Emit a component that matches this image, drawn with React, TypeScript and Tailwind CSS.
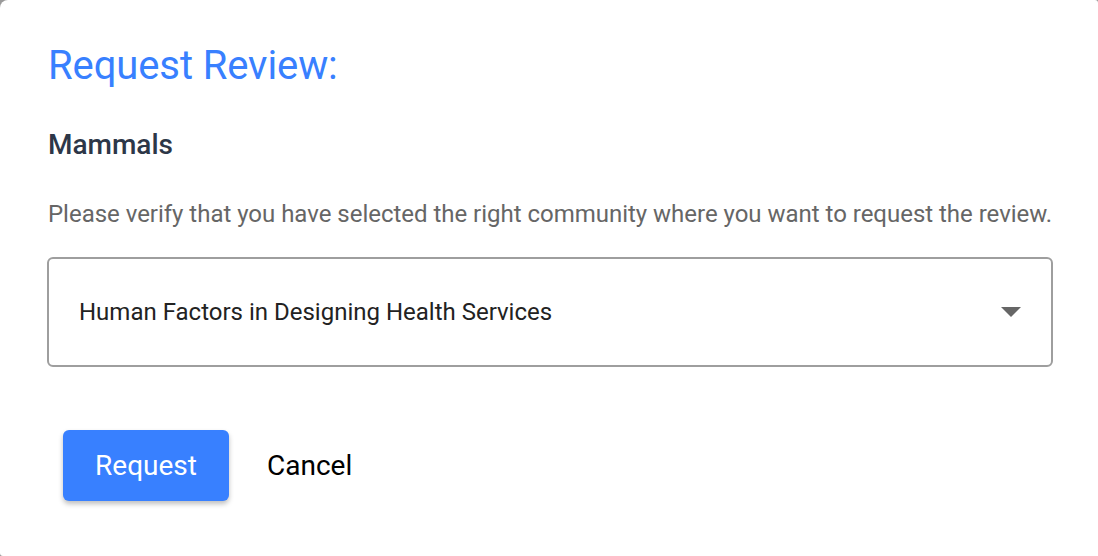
import React from "react";

export default function App() {
  return (
    <div className="w-[1098px] h-[556px] bg-[#9a9a9a] font-['Roboto','Liberation_Sans',sans-serif]">
      <div className="w-full h-full bg-white rounded-tl-[8px] rounded-tr-[3px] rounded-bl-[3px] pl-[48px] pr-[44px] pt-[42px]">
        <h1 className="text-[40px] leading-[48px] text-[#3880ff] tracking-[-0.1px]">Request Review:</h1>

        <h2 className="mt-[39px] text-[28px] leading-[32px] font-medium text-[#2d3748]">Mammals</h2>

        <p className="mt-[39px] text-[24px] leading-[28px] text-[#666666] whitespace-nowrap tracking-[-0.02px]">
          Please verify that you have selected the right community where you want to request the review.
        </p>

        <div className="mt-[29px] -ml-[1px] w-[1006px] h-[110px] border-2 border-[#9e9e9e] rounded-[6px] flex items-center justify-between pl-[30px] pr-[30px]">
          <span className="text-[24px] text-[#222222]">Human Factors in Designing Health Services</span>
          <svg width="20" height="10" viewBox="0 0 20 10">
            <path d="M0 0 L20 0 L10 10 Z" fill="#666666" />
          </svg>
        </div>

        <div className="mt-[63px] flex items-center gap-[38px] pl-[15px]">
          <button className="w-[166px] h-[71px] rounded-[6px] bg-[#3880ff] text-white text-[28px] shadow-[0_3px_5px_rgba(0,0,0,0.25)]">
            Request
          </button>
          <button className="text-[28px] text-black">Cancel</button>
        </div>
      </div>
    </div>
  );
}
